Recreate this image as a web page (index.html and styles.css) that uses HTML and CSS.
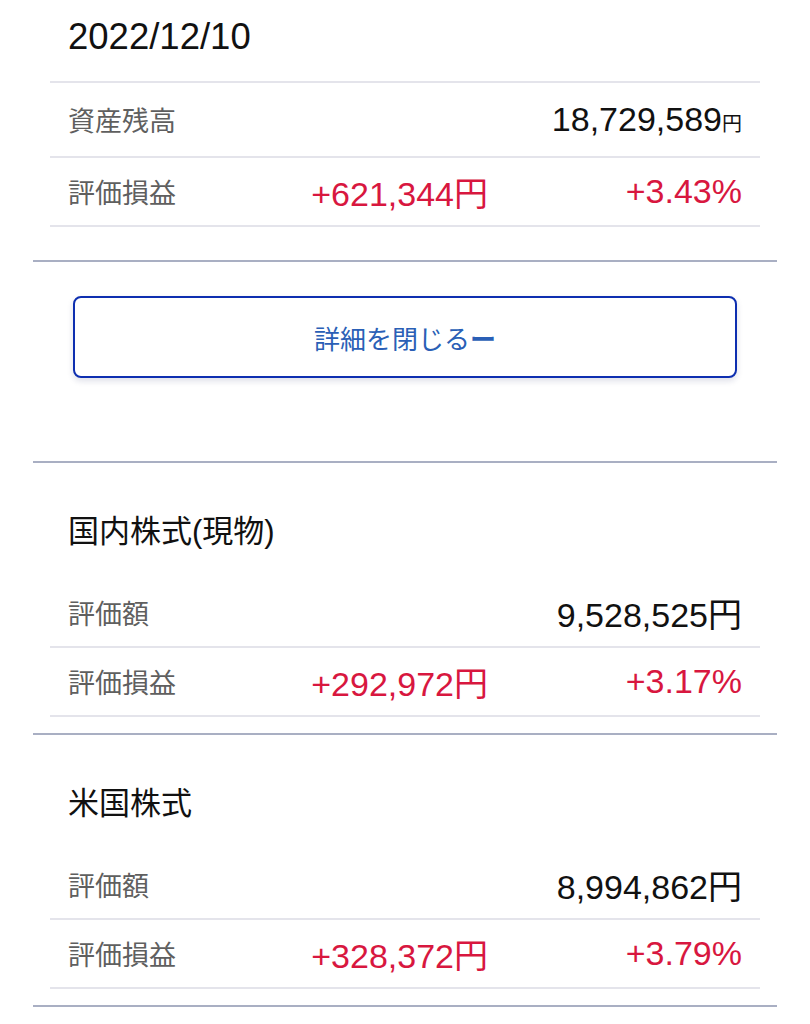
FILE: index.html
```html
<!DOCTYPE html>
<html lang="ja">
<head>
  <meta charset="utf-8">
  <title>資産残高</title>
  <link rel="stylesheet" href="styles.css">
</head>
<body>
  <div class="page">
    <!-- 合計 -->
    <section class="summary">
      <div class="date">2022/12/10</div>
      <ul class="rows rows--top">
        <li class="row row--total">
          <span class="label">資産残高</span>
          <span class="amount"></span>
          <span class="value">18,729,589<small class="yen">円</small></span>
        </li>
        <li class="row">
          <span class="label">評価損益</span>
          <span class="amount plus">+621,344円</span>
          <span class="value plus">+3.43%</span>
        </li>
      </ul>
    </section>

    <div class="toggle-area">
      <button class="toggle-btn" type="button">詳細を閉じる<span class="minus">ー</span></button>
    </div>

    <!-- 内訳 -->
    <section class="category">
      <h2 class="cat-title">国内株式(現物)</h2>
      <ul class="rows">
        <li class="row">
          <span class="label">評価額</span>
          <span class="amount"></span>
          <span class="value">9,528,525円</span>
        </li>
        <li class="row">
          <span class="label">評価損益</span>
          <span class="amount plus">+292,972円</span>
          <span class="value plus">+3.17%</span>
        </li>
      </ul>
    </section>

    <section class="category">
      <h2 class="cat-title">米国株式</h2>
      <ul class="rows">
        <li class="row">
          <span class="label">評価額</span>
          <span class="amount"></span>
          <span class="value">8,994,862円</span>
        </li>
        <li class="row">
          <span class="label">評価損益</span>
          <span class="amount plus">+328,372円</span>
          <span class="value plus">+3.79%</span>
        </li>
      </ul>
    </section>
  </div>
</body>
</html>
```

FILE: styles.css
```css
body {
  margin: 0;
  background-color: #fff;
  color: #111;
  font-family: "Liberation Sans", "Noto Sans CJK JP", sans-serif;
}

.page {
  padding: 0 33px;
}

.summary,
.toggle-area,
.category {
  border-bottom: 2px solid #a9afc3;
}

.summary {
  padding-bottom: 33px;
}

.category {
  padding-bottom: 16px;
}

.date {
  height: 81px;
  line-height: 74px;
  padding-left: 35px;
  font-size: 36.5px;
}

.rows {
  list-style: none;
  margin: 0 17px;
  padding: 0;
}

.rows--top {
  border-top: 2px solid #e4e4eb;
}

.row {
  display: grid;
  grid-template-columns: 200px 220px 1fr;
  align-items: center;
  height: 67px;
  padding: 0 18px;
  border-bottom: 2px solid #e4e4eb;
}

.row--total {
  height: 73px;
}

.label {
  font-size: 27px;
  color: #5f5f5f;
}

.amount,
.value {
  text-align: right;
  font-size: 34px;
  white-space: nowrap;
}

.yen {
  font-size: 20px;
}

.plus {
  color: #d8173f;
}

.toggle-area {
  padding: 34px 40px 83px;
}

.toggle-btn {
  display: block;
  box-sizing: border-box;
  width: 100%;
  height: 82px;
  border: 2px solid #0e2fb0;
  border-radius: 8px;
  background-color: #fff;
  box-shadow: 0 3px 6px rgba(20, 30, 90, 0.14);
  color: #2a5fb6;
  font-family: "Liberation Sans", "Noto Sans CJK JP", sans-serif;
  font-size: 26px;
}

.minus {
  font-weight: 700;
}

.cat-title {
  margin: 0;
  height: 116px;
  box-sizing: border-box;
  padding: 49px 0 0 35px;
  line-height: 40px;
  font-size: 31px;
  font-weight: 400;
}
```
